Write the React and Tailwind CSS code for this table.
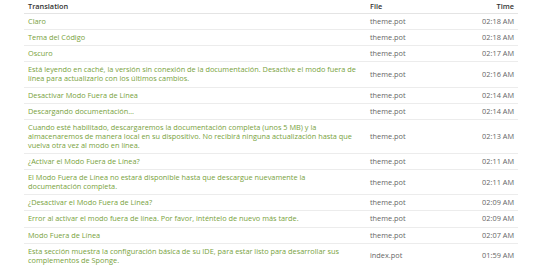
import React from "react";

const rows = [
  [["Claro"], "theme.pot", "02:18 AM"],
  [["Tema del Código"], "theme.pot", "02:18 AM"],
  [["Oscuro"], "theme.pot", "02:17 AM"],
  [["Está leyendo en caché, la versión sin conexión de la documentación. Desactive el modo fuera de", "línea para actualizarlo con los últimos cambios."], "theme.pot", "02:16 AM"],
  [["Desactivar Modo Fuera de Línea"], "theme.pot", "02:14 AM"],
  [["Descargando documentación…"], "theme.pot", "02:14 AM"],
  [["Cuando esté habilitado, descargaremos la documentación completa (unos 5 MB) y la", "almacenaremos de manera local en su dispositivo. No recibirá ninguna actualización hasta que", "vuelva otra vez al modo en línea."], "theme.pot", "02:13 AM"],
  [["¿Activar el Modo Fuera de Línea?"], "theme.pot", "02:11 AM"],
  [["El Modo Fuera de Línea no estará disponible hasta que descargue nuevamente la", "documentación completa."], "theme.pot", "02:11 AM"],
  [["¿Desactivar el Modo Fuera de Línea?"], "theme.pot", "02:09 AM"],
  [["Error al activar el modo fuera de línea. Por favor, inténtelo de nuevo más tarde."], "theme.pot", "02:09 AM"],
  [["Modo Fuera de Línea"], "theme.pot", "02:07 AM"],
  [["Esta sección muestra la configuración básica de su IDE, para estar listo para desarrollar sus", "complementos de Sponge."], "index.pot", "01:59 AM"],
];

export default function App() {
  return (
    <div className="w-[539px] h-[265px] overflow-hidden bg-white pl-[24px] pr-[21px] font-['Open_Sans',sans-serif] text-[7.35px] leading-[9.1px]">
      <table className="w-full border-collapse table-fixed">
        <colgroup>
          <col className="w-[342px]" />
          <col className="w-[95px]" />
          <col />
        </colgroup>
        <thead>
          <tr className="border-b border-[#e4e4e4]">
            <th className="text-left font-semibold text-[#333] px-[4px] pt-[1.5px] pb-[2.5px]">Translation</th>
            <th className="text-left font-semibold text-[#333] px-[4px] pt-[1.5px] pb-[2.5px]">File</th>
            <th className="text-right font-semibold text-[#333] px-[4px] pt-[1.5px] pb-[2.5px]">Time</th>
          </tr>
        </thead>
        <tbody>
          {rows.map((r, i) => (
            <tr key={i} className="border-t border-[#ececec]">
              <td className="align-middle pl-[4px] pr-0 py-[3px] text-[#78a23c] whitespace-nowrap">
                {r[0].map((line, j) => (
                  <div key={j}>{line}</div>
                ))}
              </td>
              <td className="align-middle px-[4px] py-[3px] text-[#666]">{r[1]}</td>
              <td className="align-middle px-[4px] py-[3px] text-right text-[#666]">{r[2]}</td>
            </tr>
          ))}
        </tbody>
      </table>
    </div>
  );
}
